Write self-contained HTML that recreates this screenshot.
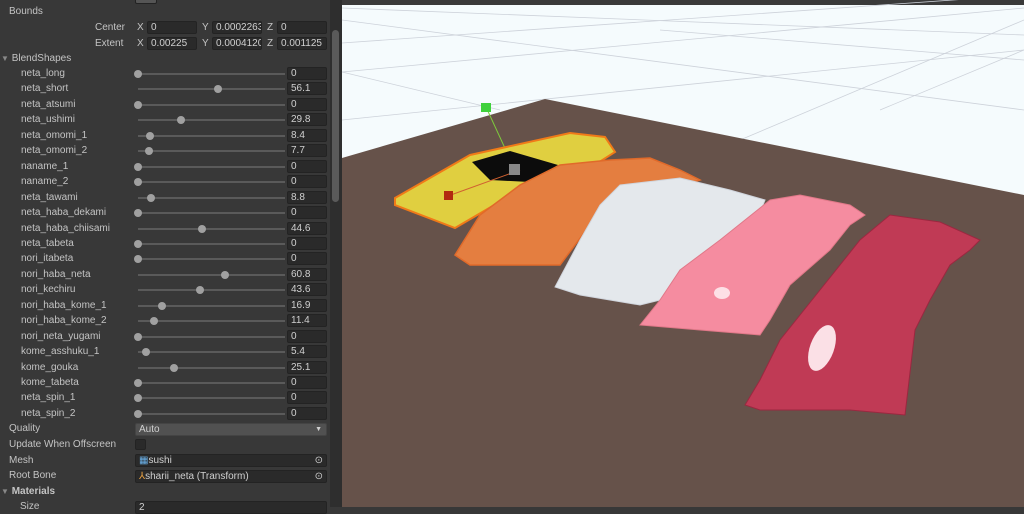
<!DOCTYPE html>
<html><head><meta charset="utf-8"><style>
body{margin:0;width:1024px;height:507px;overflow:hidden;background:#383838;font-family:"Liberation Sans",sans-serif;font-size:10px;color:#c4c4c4;position:relative}
.l{position:absolute;white-space:nowrap}
.f{position:absolute;background:#2a2a2a;border:1px solid #232323;border-radius:2px;height:13px;box-sizing:border-box;padding-left:3px;line-height:12px;font-size:10px;color:#d0d0d0;overflow:hidden}
.tr{position:absolute;left:138px;width:147px;height:2px;background:#5a5a5a}
.k{position:absolute;width:8px;height:8px;border-radius:50%;background:#a0a0a0}
</style></head><body>
<div class="f" style="left:135px;top:-6px;width:22px;height:10px;background:#555"></div>
<div class="l" style="left:9px;top:6px">Bounds</div>
<div class="l" style="left:95px;top:22px">Center</div>
<div class="l" style="left:95px;top:38px">Extent</div>
<div class="l" style="left:137px;top:22px">X</div><div class="f" style="left:147px;top:21px;width:50px">0</div>
<div class="l" style="left:202px;top:22px">Y</div><div class="f" style="left:212px;top:21px;width:50px">0.0002263</div>
<div class="l" style="left:267px;top:22px">Z</div><div class="f" style="left:277px;top:21px;width:50px">0</div>
<div class="l" style="left:137px;top:38px">X</div><div class="f" style="left:147px;top:37px;width:50px">0.00225</div>
<div class="l" style="left:202px;top:38px">Y</div><div class="f" style="left:212px;top:37px;width:50px">0.0004120</div>
<div class="l" style="left:267px;top:38px">Z</div><div class="f" style="left:277px;top:37px;width:50px">0.001125</div>
<div class="l" style="left:1px;top:53px"><span style="font-size:8px;color:#888">▼</span> BlendShapes</div>
<div id="rows"></div>
<div class="l" style="left:9px;top:423px">Quality</div>
<div class="f" style="left:135px;top:423px;width:192px;background:#515151;border-color:#444">Auto<span style="position:absolute;right:4px;font-size:7px">▼</span></div>
<div class="l" style="left:9px;top:439px">Update When Offscreen</div>
<div class="f" style="left:135px;top:439px;width:11px;height:11px;padding:0"></div>
<div class="l" style="left:9px;top:455px">Mesh</div>
<div class="f" style="left:135px;top:454px;width:192px"><span style="color:#6ab0e8">▦</span>sushi<span style="position:absolute;right:3px">⊙</span></div>
<div class="l" style="left:9px;top:470px">Root Bone</div>
<div class="f" style="left:135px;top:470px;width:192px"><span style="color:#e8a040">⅄</span>sharii_neta (Transform)<span style="position:absolute;right:3px">⊙</span></div>
<div class="l" style="left:1px;top:486px;font-weight:bold"><span style="font-size:8px;color:#888">▼</span> Materials</div>
<div class="l" style="left:20px;top:501px">Size</div>
<div class="f" style="left:135px;top:501px;width:192px">2</div>
<div style="position:absolute;left:330px;top:0;width:12px;height:507px;background:#2e2e2e"></div>
<div style="position:absolute;left:332px;top:30px;width:7px;height:172px;border-radius:4px;background:#5a5a5a"></div>
<script>
var d=[["neta_long",0],["neta_short",56.1],["neta_atsumi",0],["neta_ushimi",29.8],["neta_omomi_1",8.4],["neta_omomi_2",7.7],["naname_1",0],["naname_2",0],["neta_tawami",8.8],["neta_haba_dekami",0],["neta_haba_chiisami",44.6],["neta_tabeta",0],["nori_itabeta",0],["nori_haba_neta",60.8],["nori_kechiru",43.6],["nori_haba_kome_1",16.9],["nori_haba_kome_2",11.4],["nori_neta_yugami",0],["kome_asshuku_1",5.4],["kome_gouka",25.1],["kome_tabeta",0],["neta_spin_1",0],["neta_spin_2",0]];
var h="";d.forEach(function(r,i){var y=74+i*15.45;h+='<div class="l" style="left:21px;top:'+(y-6)+'px">'+r[0]+'</div><div class="tr" style="top:'+(y-1)+'px"></div><div class="k" style="left:'+(134+r[1]*1.43)+'px;top:'+(y-4)+'px"></div><div class="f" style="left:287px;top:'+(y-7)+'px;width:40px">'+r[1]+'</div>';});
document.getElementById("rows").innerHTML=h;
</script>
<svg style="position:absolute;left:0;top:0" width="1024" height="507">
<rect x="342" y="0" width="682" height="507" fill="#f5fbfd"/>
<rect x="342" y="0" width="682" height="5" fill="#3a3a3a"/>
<g stroke="#cdd2da" stroke-width="0.8" fill="none">
<line x1="342" y1="43" x2="1024" y2="-5"/><line x1="342" y1="72" x2="1024" y2="8"/><line x1="342" y1="120" x2="1024" y2="50"/>
<line x1="342" y1="20" x2="1024" y2="110"/><line x1="342" y1="72" x2="500" y2="110"/><line x1="660" y1="30" x2="1024" y2="60"/>
<line x1="342" y1="8" x2="1024" y2="35"/><line x1="740" y1="140" x2="1024" y2="20"/><line x1="880" y1="110" x2="1024" y2="50"/>
</g>
<polygon points="342,158 545,99 1024,195 1024,507 342,507" fill="#66524a"/>
<line x1="486" y1="107" x2="515" y2="170" stroke="#7ecb3c"/>
<rect x="481" y="103" width="10" height="9" fill="#3fd13c"/>
<polygon points="395,198 470,155 570,133 605,137 615,152 590,168 520,190 455,228 395,205" fill="#e0cf40" stroke="#f07a18" stroke-width="2"/>
<polygon points="472,162 510,151 558,165 530,182 490,180" fill="#0c0c0c"/>
<line x1="448" y1="196" x2="520" y2="170" stroke="#d06030"/>
<rect x="444" y="191" width="9" height="9" fill="#b22a10"/>
<rect x="509" y="164" width="11" height="11" fill="#888"/>
<rect x="552" y="177" width="9" height="9" fill="#3030d0"/>
<polygon points="455,255 480,215 520,185 560,165 610,160 650,158 680,170 700,180 640,200 590,225 560,265 470,265" fill="#e47e40" stroke="#e06a2a" stroke-width="1.5"/>
<polygon points="555,287 580,240 600,205 620,185 680,178 730,190 765,200 755,225 720,260 660,300 640,305 580,295" fill="#e4e8ec" stroke="#d0d5dd"/>
<polygon points="640,325 660,300 680,270 720,240 770,200 800,195 850,205 865,215 850,225 830,250 790,285 770,320 760,335 700,330" fill="#f58ca0" stroke="#e07888"/>
<ellipse cx="722" cy="293" rx="8" ry="6" fill="#fde0e6"/>
<polygon points="745,405 760,380 780,340 820,290 860,240 890,215 940,222 980,240 970,250 950,265 930,300 915,330 905,415 850,410 760,410" fill="#c03a55" stroke="#9a2840"/>
<ellipse cx="822" cy="348" rx="12" ry="24" fill="#fbe0e6" transform="rotate(20 822 348)"/>
</svg>
</body></html>
